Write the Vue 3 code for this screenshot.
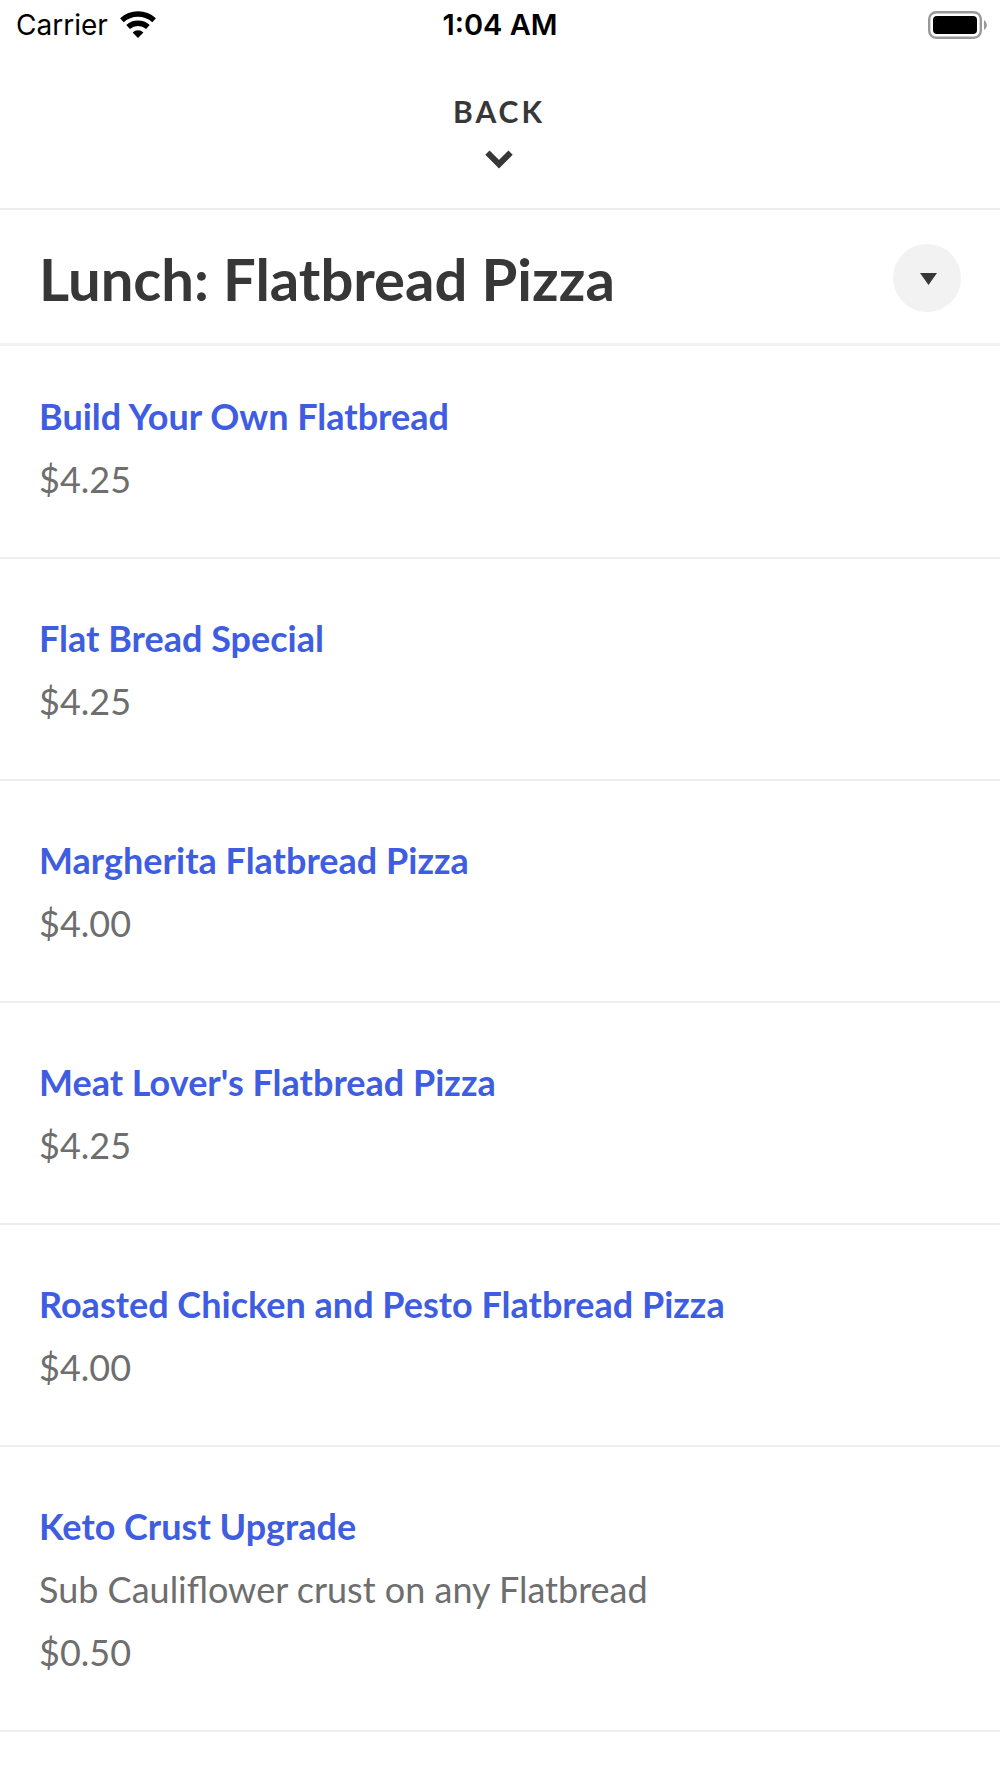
<script setup>
const items = [
  { name: 'Build Your Own Flatbread', price: '$4.25' },
  { name: 'Flat Bread Special', price: '$4.25' },
  { name: 'Margherita Flatbread Pizza', price: '$4.00' },
  { name: "Meat Lover's Flatbread Pizza", price: '$4.25' },
  { name: 'Roasted Chicken and Pesto Flatbread Pizza', price: '$4.00' },
  { name: 'Keto Crust Upgrade', note: 'Sub Cauliflower crust on any Flatbread', price: '$0.50' },
]
</script>

<template>
  <div class="screen">
    <div class="status">
      <div class="carrier">
        <span>Carrier</span>
        <svg width="36" height="28" viewBox="0 0 36 28" aria-hidden="true">
          <g fill="none" stroke="#000" stroke-width="5.4">
            <path d="M1.9 9.2a24 24 0 0 1 32.2 0" />
            <path d="M8.1 16a14.8 14.8 0 0 1 19.8 0" />
          </g>
          <path d="M18 27l-5.4-5.6a8 8 0 0 1 10.8 0z" />
        </svg>
      </div>
      <time class="clock">1:04 AM</time>
      <svg class="battery" width="60" height="28" viewBox="0 0 60 28" aria-hidden="true">
        <rect x="1.2" y="1.2" width="51.6" height="25.6" rx="7" fill="none" stroke="#999" stroke-width="2.4" />
        <rect x="5" y="5" width="44" height="18" rx="4" />
        <path d="M56 9q3 2 3 5t-3 5z" fill="#999" />
      </svg>
    </div>
    <button class="back" type="button">
      <span>BACK</span>
      <svg width="28" height="19" viewBox="0 0 28 19" aria-hidden="true">
        <path d="M2.4 2.6L14 14.2 25.6 2.6" fill="none" stroke="#373737" stroke-width="6" />
      </svg>
    </button>
    <header class="heading">
      <h1>Lunch: Flatbread Pizza</h1>
      <button class="toggle" type="button" aria-label="Choose section">
        <svg width="17" height="12" viewBox="0 0 17 12" aria-hidden="true"><path d="M0 0h17L8.5 12z" fill="#373737" /></svg>
      </button>
    </header>
    <ul class="menu">
      <li v-for="item in items" :key="item.name">
        <a href="#">{{ item.name }}</a>
        <p v-if="item.note">{{ item.note }}</p>
        <p>{{ item.price }}</p>
      </li>
    </ul>
  </div>
</template>

<style>
body {
  margin: 0;
  background: #fff;
}
</style>

<style scoped>
.screen {
  font-family: Lato, sans-serif;
  color: #373737;
}
.status {
  display: grid;
  grid-template-columns: 1fr auto 1fr;
  align-items: center;
  height: 50px;
  padding: 0 12px 0 16px;
  font-family: Inter, sans-serif;
  font-size: 28px;
  line-height: 34px;
  color: #000;
}
.carrier {
  display: flex;
  align-items: center;
  gap: 12px;
}
.clock {
  padding-right: 4px;
  font-size: 29px;
  font-weight: 600;
}
.battery {
  justify-self: end;
}
.back {
  display: flex;
  flex-direction: column;
  align-items: center;
  gap: 21px;
  width: 100%;
  height: 160px;
  padding: 43px 2px 0 0;
  border: 0;
  border-bottom: 2px solid #eee;
  background: none;
  font: 700 30px/36px Lato, sans-serif;
  letter-spacing: 3px;
  color: #373737;
}
.heading {
  display: flex;
  align-items: center;
  justify-content: space-between;
  padding: 34px 39px 31px;
  border-bottom: 3px solid #f1f1f1;
}
h1 {
  margin: 0;
  padding-top: 2px;
  font-size: 58px;
  line-height: 66px;
}
.toggle {
  display: grid;
  place-items: center;
  width: 68px;
  height: 68px;
  padding: 2px 0 0 2px;
  border: 0;
  border-radius: 50%;
  background: #f2f2f2;
}
.menu {
  margin: 0;
  padding: 0;
  list-style: none;
}
li {
  padding: 48px 39px 46px;
  border-bottom: 2px solid #eee;
  font-size: 36px;
  line-height: 63px;
}
li:first-child {
  padding-top: 39px;
}
a {
  display: block;
  font-weight: 700;
  color: #3f5de0;
  text-decoration: none;
}
p {
  margin: 0;
  color: #6e6e6e;
}
</style>
